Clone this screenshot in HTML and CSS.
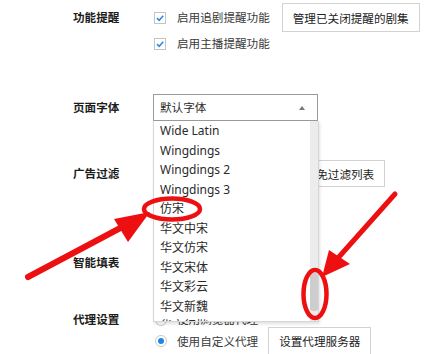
FILE: index.html
```html
<!DOCTYPE html>
<html lang="zh-CN">
<head>
  <meta charset="UTF-8" />
  <title>常规设置</title>
  <link rel="stylesheet" href="styles.css">
</head>
<body>

  <div class="settings">

    <!-- 功能提醒 -->
    <div class="row row-remind">
      <div class="label tall">功能提醒</div>
      <div class="opts">
        <div class="line tall">
          <label class="check">
            <span class="box"><svg viewBox="0 0 10 10"><path d="M2 5.2 L4.2 7.3 L8.2 2.8"/></svg></span>
            启用追剧提醒功能
          </label>
          <button class="btn">管理已关闭提醒的剧集</button>
        </div>
        <div class="line small">
          <label class="check">
            <span class="box"><svg viewBox="0 0 10 10"><path d="M2 5.2 L4.2 7.3 L8.2 2.8"/></svg></span>
            启用主播提醒功能
          </label>
        </div>
      </div>
    </div>

    <!-- 页面字体 -->
    <div class="row row-font">
      <div class="label select-h">页面字体</div>
      <div class="opts">
        <div class="select">
          <span>默认字体</span>
          <span class="caret"></span>
          <ul class="dropdown">
            <li>Wide Latin</li>
            <li>Wingdings</li>
            <li>Wingdings 2</li>
            <li>Wingdings 3</li>
            <li>仿宋</li>
            <li>华文中宋</li>
            <li>华文仿宋</li>
            <li>华文宋体</li>
            <li>华文彩云</li>
            <li>华文新魏</li>
            <li>华文行楷</li>
          </ul>
          <div class="scrollbar"><div class="thumb"></div></div>
        </div>
      </div>
    </div>

    <!-- 广告过滤 (left part sits under the open font list) -->
    <div class="row row-ad">
      <div class="label select-h">广告过滤</div>
      <div class="opts">
        <div class="line select-h">
          <button class="btn btn-ad">管理免过滤列表</button>
        </div>
      </div>
    </div>

    <!-- 智能填表 -->
    <div class="row row-fill">
      <div class="label small">智能填表</div>
      <div class="opts"></div>
    </div>

    <!-- 代理设置 -->
    <div class="row row-proxy">
      <div class="label tiny">代理设置</div>
      <div class="opts">
        <div class="line tiny">
          <label class="radio"><span class="dot"></span>使用浏览器代理</label>
        </div>
        <div class="line btn-h">
          <label class="radio"><span class="dot on"></span>使用自定义代理</label>
          <button class="btn">设置代理服务器</button>
        </div>
      </div>
    </div>

  </div>

  <!-- annotation marks drawn over the screenshot -->
  <svg class="marks" width="436" height="354" viewBox="0 0 436 354">
    <g fill="none" stroke="#ee1010" stroke-linecap="round">
      <line x1="28" y1="277" x2="126" y2="225" stroke-width="6"/>
      <line x1="395" y1="194" x2="338" y2="258" stroke-width="5"/>
      <ellipse cx="172" cy="209" rx="28" ry="10.5" stroke-width="4.5"/>
      <ellipse cx="315" cy="294" rx="11.5" ry="24" stroke-width="4.5"/>
    </g>
    <g fill="#ee1010">
      <polygon points="150,212 114,219 128,242"/>
      <polygon points="322,277 329,250 350,264"/>
    </g>
  </svg>

</body>
</html>
```

FILE: styles.css
```css
/* Base */
html, body {
  margin: 0;
  height: 100%;
  overflow: hidden;
}
body {
  background: #fff;
  font-family: "Noto Sans", "Noto Sans CJK SC", sans-serif;
  font-size: 11.6px;
  color: #333;
  position: relative;
}

.settings {
  padding: 3px 0 0 73px;
}

/* Rows */
.row {
  display: grid;
  grid-template-columns: 80px 1fr;
  align-items: start;
}
.row-font { margin-top: 42px; }
.row-ad { margin-top: 39px; }
.row-fill { margin-top: 68px; }
.row-proxy { margin-top: 42px; }

.label {
  font-weight: 700;
  color: #1c1c1c;
  white-space: nowrap;
}

.line {
  display: flex;
  align-items: center;
  white-space: nowrap;
}
.tall { height: 29px; line-height: 29px; }
.small { height: 16px; line-height: 16px; }
.select-h { height: 27px; line-height: 27px; }
.tiny { height: 14px; line-height: 14px; }
.btn-h { height: 28px; }
.row-remind .line.small { margin-top: 4px; }

/* Checkbox / radio */
.check, .radio {
  display: flex;
  align-items: center;
  color: #3a3a3a;
}
.box {
  width: 10px;
  height: 10px;
  border: 1px solid #c4c4c4;
  background: #fff;
  margin: 0 11px 0 1px;
  display: flex;
}
.box svg {
  width: 10px;
  height: 10px;
  fill: none;
  stroke: #2b8be6;
  stroke-width: 1.6;
}
.dot {
  width: 10px;
  height: 10px;
  border: 1px solid #c8c8c8;
  border-radius: 50%;
  margin: 0 10px 0 2px;
  position: relative;
}
.dot.on::after {
  content: "";
  position: absolute;
  left: 2px;
  top: 2px;
  width: 6px;
  height: 6px;
  border-radius: 50%;
  background: #1f86e6;
}

/* Buttons */
.btn {
  font-family: inherit;
  font-size: 11.6px;
  color: #222;
  background: #fff;
  border: 1px solid #d2d2d2;
  border-radius: 0;
  padding: 0 10px;
  margin-left: 12px;
  height: 100%;
}
.btn-ad { margin-left: 129px; }
.row-proxy .btn { margin-left: 10px; }

/* Font select */
.select {
  position: relative;
  width: 157px;
  height: 25px;
  border: 1px solid #9a9a9a;
  padding: 0 0 0 6px;
  line-height: 25px;
  color: #2a2a2a;
}
.caret {
  position: absolute;
  right: 12px;
  top: 11px;
  border-left: 3.5px solid transparent;
  border-right: 3.5px solid transparent;
  border-bottom: 4px solid #777;
}
.dropdown {
  position: absolute;
  left: -1px;
  top: 26px;
  width: 164px;
  height: 200px;
  margin: 0;
  padding: 0;
  list-style: none;
  background: #fff;
  border: 1px solid #d6d6d6;
  border-top: none;
  box-shadow: 1px 2px 3px rgba(0, 0, 0, 0.12);
  overflow: hidden;
  z-index: 2;
}
.dropdown li {
  height: 19.5px;
  line-height: 19.5px;
  padding-left: 6px;
  font-size: 12px;
  color: #2a2a2a;
}
.scrollbar {
  position: absolute;
  left: 156px;
  top: 26px;
  width: 8px;
  height: 200px;
  background: #ececec;
  z-index: 3;
}
.thumb {
  position: absolute;
  left: 0;
  top: 152px;
  width: 8px;
  height: 38px;
  border-radius: 3px;
  background: #cdcdcd;
}

/* Annotation overlay */
.marks {
  position: absolute;
  left: 0;
  top: 0;
  z-index: 5;
  pointer-events: none;
}
```
